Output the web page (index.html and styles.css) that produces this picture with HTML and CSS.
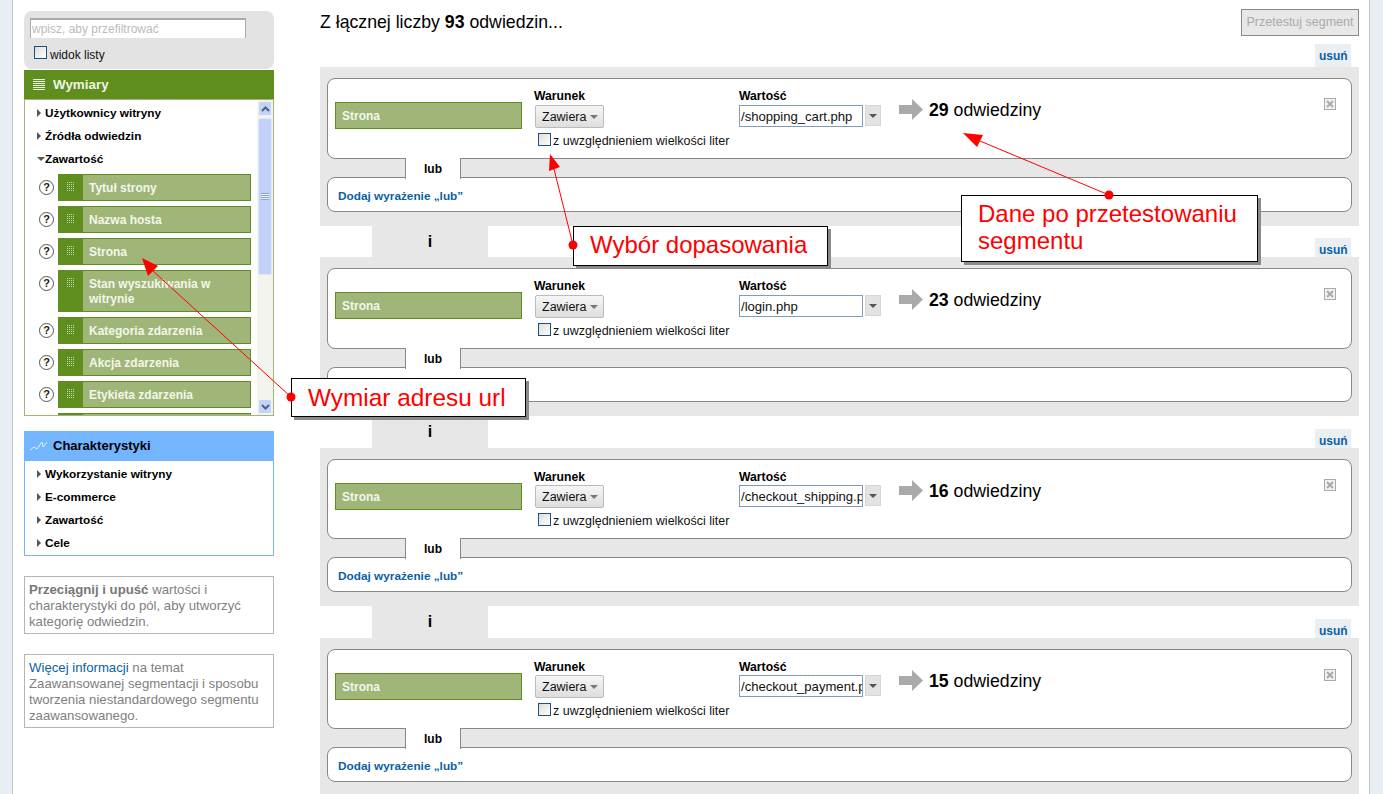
FILE: index.html
```html
<!DOCTYPE html>
<html lang="pl">
<head>
<meta charset="utf-8">
<title>Segment zaawansowany</title>
<link rel="stylesheet" href="styles.css">
</head>
<body>
<div class="gutter gutter-left"></div>
<aside class="sidebar">
  <div class="filter">
    <div class="filter-input">wpisz, aby przefiltrować</div>
    <label class="list-view"><span class="check"></span>widok listy</label>
  </div>
  <div class="head head-green"><span class="lines-icon"></span>Wymiary</div>
  <div class="dims">
    <div class="dims-scroll">
      <div class="tree-item"><span class="tri"></span>Użytkownicy witryny</div>
      <div class="tree-item"><span class="tri"></span>Źródła odwiedzin</div>
      <div class="tree-item"><span class="tri-down"></span>Zawartość</div>
      <div class="chips">
        <div class="chip-row"><span class="help">?</span><div class="chip"><span class="grip"><i></i></span><span class="chip-text">Tytuł strony</span></div></div>
        <div class="chip-row"><span class="help">?</span><div class="chip"><span class="grip"><i></i></span><span class="chip-text">Nazwa hosta</span></div></div>
        <div class="chip-row"><span class="help">?</span><div class="chip"><span class="grip"><i></i></span><span class="chip-text">Strona</span></div></div>
        <div class="chip-row"><span class="help">?</span><div class="chip chip-tall"><span class="grip"><i></i></span><span class="chip-text">Stan wyszukiwania w witrynie</span></div></div>
        <div class="chip-row"><span class="help">?</span><div class="chip"><span class="grip"><i></i></span><span class="chip-text">Kategoria zdarzenia</span></div></div>
        <div class="chip-row"><span class="help">?</span><div class="chip"><span class="grip"><i></i></span><span class="chip-text">Akcja zdarzenia</span></div></div>
        <div class="chip-row"><span class="help">?</span><div class="chip"><span class="grip"><i></i></span><span class="chip-text">Etykieta zdarzenia</span></div></div>
        <div class="chip-row"><span class="help-empty"></span><div class="chip"><span class="grip"></span><span class="chip-text"></span></div></div>
      </div>
    </div>
    <div class="scrollbar">
      <div class="sb-btn"><svg width="9" height="6" viewBox="0 0 9 6"><path d="M1 5l3.500-3.500L8 5" fill="none" stroke="#4d6185" stroke-width="2"/></svg></div>
      <div class="sb-thumb"><span class="sb-grip"></span></div>
      <div class="sb-track"></div>
      <div class="sb-btn"><svg width="9" height="6" viewBox="0 0 9 6"><path d="M1 1l3.500 3.500L8 1" fill="none" stroke="#4d6185" stroke-width="2"/></svg></div>
    </div>
  </div>

  <div class="head head-blue">
    <svg class="zig" width="18" height="10" viewBox="0 0 18 10"><path d="M0 9l4-3 3 2 5-7 1 5 4-5" fill="none" stroke="#e8f2ff" stroke-width="1"/></svg>Charakterystyki
  </div>
  <div class="metrics">
    <div class="tree-item"><span class="tri"></span>Wykorzystanie witryny</div>
    <div class="tree-item"><span class="tri"></span>E-commerce</div>
    <div class="tree-item"><span class="tri"></span>Zawartość</div>
    <div class="tree-item"><span class="tri"></span>Cele</div>
  </div>

  <div class="info"><b>Przeciągnij i upuść</b> wartości i charakterystyki do pól, aby utworzyć kategorię odwiedzin.</div>
  <div class="info"><a class="info-link">Więcej informacji</a> na temat Zaawansowanej segmentacji i sposobu tworzenia niestandardowego segmentu zaawansowanego.</div>
</aside>

<main class="main">
  <header class="top">
    <h1 class="title">Z łącznej liczby <b>93</b> odwiedzin...</h1>
    <div class="test-btn">Przetestuj segment</div>
  </header>

  <section class="block">
    <a class="remove remove-first">usuń</a>
    <div class="card">
      <div class="field-chip">Strona</div>
      <div class="cond">
        <div class="lbl">Warunek</div>
        <div class="select">Zawiera<span class="caret"></span></div>
        <label class="case"><span class="check"></span>z uwzględnieniem wielkości liter</label>
      </div>
      <div class="val">
        <div class="lbl">Wartość</div>
        <div class="val-row"><div class="val-input">/shopping_cart.php</div><div class="val-drop"><span class="caret caret-dark"></span></div></div>
      </div>
      <div class="result">
        <svg class="res-arrow" width="24" height="21" viewBox="0 0 24 21"><path d="M0 6h13V0l11 10.500-11 10.500v-6H0z" fill="#aaa"/></svg>
        <span class="count"><b>29</b> odwiedziny</span>
      </div>
      <svg class="close" width="12" height="12" viewBox="0 0 12 12"><rect x=".5" y=".5" width="11" height="11" fill="#f2f2f2" stroke="#aaa"/><path d="M3 3l6 6M9 3l-6 6" stroke="#aaa" stroke-width="2"/></svg>
    </div>
    <div class="or-row"><div class="or-tab">lub</div></div>
    <div class="add-card"><a class="add-link">Dodaj wyrażenie „lub”</a></div>
  </section>
  <div class="and">i</div>

  <section class="block">
    <a class="remove">usuń</a>
    <div class="card">
      <div class="field-chip">Strona</div>
      <div class="cond">
        <div class="lbl">Warunek</div>
        <div class="select">Zawiera<span class="caret"></span></div>
        <label class="case"><span class="check"></span>z uwzględnieniem wielkości liter</label>
      </div>
      <div class="val">
        <div class="lbl">Wartość</div>
        <div class="val-row"><div class="val-input">/login.php</div><div class="val-drop"><span class="caret caret-dark"></span></div></div>
      </div>
      <div class="result">
        <svg class="res-arrow" width="24" height="21" viewBox="0 0 24 21"><path d="M0 6h13V0l11 10.500-11 10.500v-6H0z" fill="#aaa"/></svg>
        <span class="count"><b>23</b> odwiedziny</span>
      </div>
      <svg class="close" width="12" height="12" viewBox="0 0 12 12"><rect x=".5" y=".5" width="11" height="11" fill="#f2f2f2" stroke="#aaa"/><path d="M3 3l6 6M9 3l-6 6" stroke="#aaa" stroke-width="2"/></svg>
    </div>
    <div class="or-row"><div class="or-tab">lub</div></div>
    <div class="add-card"><a class="add-link">Dodaj wyrażenie „lub”</a></div>
  </section>
  <div class="and and-tall">i</div>

  <section class="block block-short">
    <a class="remove">usuń</a>
    <div class="card">
      <div class="field-chip">Strona</div>
      <div class="cond">
        <div class="lbl">Warunek</div>
        <div class="select">Zawiera<span class="caret"></span></div>
        <label class="case"><span class="check"></span>z uwzględnieniem wielkości liter</label>
      </div>
      <div class="val">
        <div class="lbl">Wartość</div>
        <div class="val-row"><div class="val-input">/checkout_shipping.php</div><div class="val-drop"><span class="caret caret-dark"></span></div></div>
      </div>
      <div class="result">
        <svg class="res-arrow" width="24" height="21" viewBox="0 0 24 21"><path d="M0 6h13V0l11 10.500-11 10.500v-6H0z" fill="#aaa"/></svg>
        <span class="count"><b>16</b> odwiedziny</span>
      </div>
      <svg class="close" width="12" height="12" viewBox="0 0 12 12"><rect x=".5" y=".5" width="11" height="11" fill="#f2f2f2" stroke="#aaa"/><path d="M3 3l6 6M9 3l-6 6" stroke="#aaa" stroke-width="2"/></svg>
    </div>
    <div class="or-row"><div class="or-tab">lub</div></div>
    <div class="add-card"><a class="add-link">Dodaj wyrażenie „lub”</a></div>
  </section>
  <div class="and and-tall">i</div>

  <section class="block block-short">
    <a class="remove">usuń</a>
    <div class="card">
      <div class="field-chip">Strona</div>
      <div class="cond">
        <div class="lbl">Warunek</div>
        <div class="select">Zawiera<span class="caret"></span></div>
        <label class="case"><span class="check"></span>z uwzględnieniem wielkości liter</label>
      </div>
      <div class="val">
        <div class="lbl">Wartość</div>
        <div class="val-row"><div class="val-input">/checkout_payment.php</div><div class="val-drop"><span class="caret caret-dark"></span></div></div>
      </div>
      <div class="result">
        <svg class="res-arrow" width="24" height="21" viewBox="0 0 24 21"><path d="M0 6h13V0l11 10.500-11 10.500v-6H0z" fill="#aaa"/></svg>
        <span class="count"><b>15</b> odwiedziny</span>
      </div>
      <svg class="close" width="12" height="12" viewBox="0 0 12 12"><rect x=".5" y=".5" width="11" height="11" fill="#f2f2f2" stroke="#aaa"/><path d="M3 3l6 6M9 3l-6 6" stroke="#aaa" stroke-width="2"/></svg>
    </div>
    <div class="or-row"><div class="or-tab">lub</div></div>
    <div class="add-card"><a class="add-link">Dodaj wyrażenie „lub”</a></div>
  </section>
</main>
<div class="gutter gutter-right"></div>

<div class="callout callout-url">Wymiar adresu url</div>
<div class="callout callout-match">Wybór dopasowania</div>
<div class="callout callout-data">Dane po przetestowaniu segmentu</div>

<svg class="overlay" width="1383" height="794" viewBox="0 0 1383 794">
  <g fill="#f00" stroke="none">
    <path d="M142 258l16 8-10 10z"/>
    <path d="M550 154l10 13-11 4z"/>
    <path d="M963 133l20 2-6 12z"/>
    <circle cx="291" cy="397" r="4.500"/>
    <circle cx="573" cy="245" r="4.500"/>
    <circle cx="1109" cy="195" r="4.500"/>
  </g>
  <g stroke="#f00" stroke-width="1" fill="none">
    <path d="M153 271L291 397"/>
    <path d="M554 169L573 245"/>
    <path d="M980 141L1109 195"/>
  </g>
</svg>
</body>
</html>
```

FILE: styles.css
```css
* { box-sizing: border-box; }
html, body { margin: 0; padding: 0; }
body {
  width: 1383px;
  height: 794px;
  overflow: hidden;
  position: relative;
  display: flex;
  background: #fff;
  color: #000;
  font: 12px/14px "Liberation Sans", Arial, sans-serif;
}
.gutter { flex: none; background: #e9edf4; height: 794px; }
.gutter-left { width: 13px; border-right: 1px solid #c8c8c8; }
.gutter-right { width: 14px; border-left: 1px solid #c8c8c8; }

/* sidebar */
.sidebar { flex: none; width: 250px; margin-left: 11px; padding-top: 11px; }
.filter { height: 58px; margin-bottom: 1px; padding: 7px 6px 0; background: #e3e3e3; border-radius: 8px; }
.filter-input {
  width: 216px; height: 20px; padding-left: 1px;
  background: #fff; color: #bbb; line-height: 18px;
  border-top: 2px solid #aaa; border-left: 1px solid #aaa; border-right: 1px solid #aaa;
}
.list-view { display: flex; align-items: flex-start; margin: 8px 0 0 4px; line-height: 18px; color: #111; }
.check {
  flex: none; display: block; width: 13px; height: 13px; margin-right: 3px;
  border: 1px solid #1c5180; background: linear-gradient(135deg, #dcdcd7, #fff);
}
.head { display: flex; align-items: center; font-weight: bold; font-size: 13px; }
.head-green { height: 29px; background: #5f8e1f; color: #eef3e2; padding-left: 9px; font-size: 13.400px; }
.lines-icon {
  width: 12px; height: 11px; margin-right: 8px;
  background: repeating-linear-gradient(#eef3e2 0 1px, transparent 1px 2px);
}
.head-blue { height: 30px; margin-top: 15px; background: #74b5ff; color: #000; padding-left: 6px; }
.zig { margin-right: 5px; }
.dims { display: flex; height: 317px; border: 1px solid #9fb678; overflow: hidden; }
.dims-scroll { width: 232px; padding-top: 1px; overflow: hidden; flex: none; }
.tree-item { display: flex; align-items: center; height: 23px; padding-left: 12px; font-size: 11.800px; font-weight: bold; color: #000; }
.tri { width: 0; height: 0; margin-right: 4px; border-left: 4px solid #555; border-top: 4px solid transparent; border-bottom: 4px solid transparent; }
.tri-down { width: 0; height: 0; border-top: 4px solid #555; border-left: 4px solid transparent; border-right: 4px solid transparent; }
.chips { display: flex; flex-direction: column; gap: 5px; margin-top: 4px; padding-left: 14px; }
.chip-row { display: flex; align-items: flex-start; }
.help {
  flex: none; width: 15px; height: 15px; margin-top: 6px; margin-right: 4px;
  border: 1.500px solid #555; border-radius: 50%; background: #fff;
  font-size: 11px; font-weight: bold; line-height: 12px; text-align: center; color: #222;
}
.help-empty { flex: none; width: 19px; }
.chip {
  display: flex; width: 193px; min-height: 27px;
  background: #9fb678; border: 1px solid #5f8e1f;
}
.chip-tall { min-height: 42px; }
.grip { flex: none; width: 24px; padding: 6px 0 0 7px; background: #5f8e1f; }
.grip i {
  display: block; width: 8px; height: 10px;
  background-image: linear-gradient(#5f8e1f 50%, transparent 50%), linear-gradient(90deg, #5f8e1f 50%, #c9d8b0 50%);
  background-size: 2px 2px;
}
.chip-text { padding: 6px 6px 0; font-weight: bold; color: #f3f6ea; line-height: 15px; }
.scrollbar { flex: none; width: 16px; display: flex; flex-direction: column; padding: 1px; background: #f4f4ee; }
.sb-btn {
  flex: none; height: 15px; display: flex; align-items: center; justify-content: center;
  background: #c4d4f6; border: 1px solid #eef2fb; border-radius: 2px;
}
.sb-thumb {
  flex: none; height: 157px; margin-top: 2px; display: flex; align-items: center; justify-content: center;
  background: #c0d2f8; border: 1px solid #dfe8fb; border-radius: 2px;
}
.sb-grip { width: 8px; height: 7px; background: repeating-linear-gradient(#8ea6d6 0 1px, #e6edfc 1px 2px); }
.sb-track { flex: 1; }
.metrics { height: 95px; padding-top: 1px; border: 1px solid #74b5ff; border-top: 0; }
.info { margin-top: 20px; padding: 5px 4px 3px; border: 1px solid #b5b5b5; color: #808080; font-size: 13.200px; line-height: 16px; }
.info b { color: #777; }
.info-link { color: #0b5fa5; }

/* main */
.main { flex: none; width: 1039px; margin-left: 46px; margin-right: 10px; }
.top { display: flex; justify-content: space-between; height: 67px; padding-top: 9px; }
.title { margin: 4px 0 0; font-size: 17.700px; line-height: 18px; font-weight: normal; color: #000; }
.test-btn {
  width: 118px; height: 27px; background: #e8e8e8; border: 1px solid #888;
  color: #aaa; font-size: 12.500px; line-height: 25px; text-align: center;
}
.block { position: relative; height: 159px; padding: 11px 7px 0; background: #e7e7e7; }
.block-short { height: 158px; }
.remove {
  position: absolute; right: 8px; bottom: 100%;
  height: 19px; padding: 5px 3px 0 4px; width: 36px;
  background: #eaeff4; color: #0b5fa5; font-weight: bold; line-height: 14px;
}
.remove-first { height: 23px; }
.card {
  display: flex; align-items: flex-start; position: relative;
  height: 81px; padding: 10px 15px 0 7px;
  background: #fff; border: 1px solid #888; border-radius: 8px;
}
.block-short .card { height: 80px; }
.field-chip {
  flex: none; width: 187px; height: 27px; margin-top: 13px; padding-left: 6px;
  background: #9fb678; border: 1px solid #5f8e1f;
  color: #f3f6ea; font-weight: bold; line-height: 26px;
}
.cond { flex: none; width: 205px; margin-left: 12px; }
.lbl { font-size: 12.200px; font-weight: bold; line-height: 14px; color: #000; }
.select {
  display: flex; align-items: center; width: 69px; height: 23px; margin: 2px 0 0 1px; padding-left: 6px;
  border: 1px solid #bbb; border-radius: 2px;
  background: linear-gradient(#f6f6f6, #dedede); color: #111; font-size: 12.500px;
}
.block-short .select { margin-top: 1px; }
.caret { width: 0; height: 0; margin-left: 4px; border-top: 4px solid #777; border-left: 4px solid transparent; border-right: 4px solid transparent; }
.caret-dark { margin: 0; border-top-color: #555; }
.case { display: flex; align-items: flex-start; margin: 5px 0 0 4px; color: #111; font-size: 12.500px; line-height: 16px; white-space: nowrap; }
.case .check { margin-right: 2px; }
.val { flex: none; width: 160px; }
.val-row { display: flex; gap: 2px; margin-top: 2px; }
.block-short .val-row { margin-top: 1px; }
.val-input {
  width: 124px; height: 22px; padding-left: 1px; overflow: hidden; white-space: nowrap;
  border: 1px solid #7f9db9; background: #fff; color: #111; font-size: 13.100px; line-height: 21px;
}
.val-drop { display: flex; align-items: center; justify-content: center; width: 16px; height: 21px; background: #e3e3e3; border: 1px solid #d6d6d6; }
.result { flex: 1; display: flex; align-items: center; gap: 6px; margin-top: 9px; font-size: 17.700px; line-height: 21px; color: #000; white-space: nowrap; }
.count { padding-top: 2px; }
.res-arrow { flex: none; }
.close { flex: none; margin-top: 9px; }
.or-row { height: 19px; }
.or-tab {
  position: relative; z-index: 1;
  width: 56px; height: 21px; margin: -1px 0 0 78px;
  background: #fff; border-left: 1px solid #888; border-right: 1px solid #888;
  font-weight: bold; text-align: center; line-height: 22px;
}
.add-card { height: 35px; padding: 11px 10px 0; background: #fff; border: 1px solid #888; border-radius: 8px; }
.add-link { color: #0b5fa5; font-size: 11.800px; font-weight: bold; }
.and {
  width: 116px; height: 31px; margin-left: 52px; background: #e7e7e7;
  font-size: 16px; font-weight: bold; text-align: center; line-height: 31px;
}
.and-tall { height: 32px; }

/* annotations */
.callout {
  position: absolute; z-index: 5;
  background: #fff; border: 1px solid #000; box-shadow: 3px 3px 0 #8a8a8a;
  color: #f00; font-size: 24px; line-height: 27px; padding-left: 16px;
}
.callout-url { left: 291px; top: 378px; width: 235px; height: 39px; padding-top: 5px; font-size: 24.400px; }
.callout-match { left: 573px; top: 226px; width: 255px; height: 40px; padding-top: 4px; }
.callout-data { left: 961px; top: 195px; width: 297px; height: 67px; padding: 4px 10px 0 16px; }
.overlay { position: absolute; left: 0; top: 0; z-index: 6; pointer-events: none; }
```
